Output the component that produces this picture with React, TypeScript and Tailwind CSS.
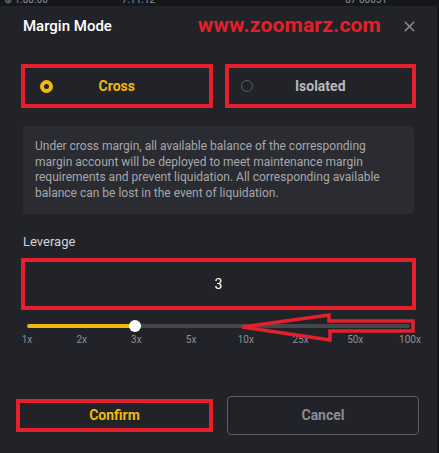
import { X } from "lucide-react";

const marks = ["1x", "2x", "3x", "5x", "10x", "25x", "50x", "100x"];

export default function App() {
  return (
    <div className="w-[439px] h-[453px] bg-[#222328] border-r-2 border-[#15161a] flex flex-col font-['Roboto',sans-serif] overflow-hidden">
      {/* page behind the modal */}
      <div className="h-[6px] bg-[#16171b] overflow-hidden">
        <div className="flex gap-[40px] pl-[4px] -mt-[6px] text-[10px] text-[#8c8f96] leading-[12px]">
          <span>⊕ 1.00.00</span>
          <span className="ml-[34px]">7.11.12</span>
          <span className="ml-[150px]">87 00051</span>
        </div>
      </div>

      <div className="h-[40px] flex items-center pl-[23px] pr-[19px]">
        <h2 className="text-[15px] font-medium text-white">Margin Mode</h2>
        <span className="ml-auto mr-[20px] text-[21px] font-bold text-[#e3202b] tracking-[0.2px]">
          www.zoomarz.com
        </span>
        <X size={17} strokeWidth={2} className="text-[#8a8d93]" />
      </div>

      <div className="mt-[18px] px-[21px] flex gap-[12px]">
        <button className="w-[193px] h-[44px] border-[4px] border-[#e3202b] flex items-center">
          <span className="ml-[15px] w-[13px] h-[13px] rounded-full border-[4px] border-[#f0b90b] bg-[#222328]" />
          <span className="flex-1 text-center text-[14px] font-bold text-[#f0b90b]">Cross</span>
          <span className="w-[28px]" />
        </button>
        <button className="w-[193px] h-[44px] border-[4px] border-[#e3202b] flex items-center">
          <span className="ml-[12px] w-[12px] h-[12px] rounded-full border border-[#5c5f66]" />
          <span className="flex-1 text-center text-[14px] font-bold text-[#b7b9bd]">Isolated</span>
          <span className="w-[24px]" />
        </button>
      </div>

      <div className="mt-[18px] mx-[23px] h-[88px] rounded-[3px] bg-[#2a2c31] px-[12px] py-[13px] text-[12px] leading-[15.7px] text-[#a6a8ad]">
        Under cross margin, all available balance of the corresponding margin account will be deployed to meet
        maintenance margin requirements and prevent liquidation. All corresponding available balance can be lost in
        the event of liquidation.
      </div>

      <div className="mt-[20px] pl-[23px] text-[13px] leading-[16px] text-[#d0d2d5]">Leverage</div>

      <div className="mt-[8px] mx-[21px] h-[52px] border-[4px] border-[#e3202b] flex items-center justify-center text-[14px] text-white">
        3
      </div>

      <div className="relative mt-[8px] h-[16px] ml-[27px] w-[383px] flex items-center">
        <div className="h-[4px] w-[108px] rounded-l-full bg-[#f0b90b]" />
        <div className="h-[4px] flex-1 rounded-r-full bg-[#45474d]" />
        <div className="absolute left-[102px] top-[2px] w-[12px] h-[12px] rounded-full bg-white" />
        <svg className="absolute -left-[27px] -top-[8px]" width="439" height="40" viewBox="0 310 439 40">
          <polygon
            points="242,327 329,315 329,321 413,321 413,331 330,331 330,340"
            fill="none"
            stroke="#e3202b"
            strokeWidth="3.5"
            strokeLinejoin="miter"
          />
        </svg>
      </div>

      <div className="ml-[27px] w-[383px] h-[12px] flex justify-between">
        {marks.map((m) => (
          <div key={m} className="w-0 flex justify-center">
            <span className="text-[10px] leading-[12px] text-[#8d9096] whitespace-nowrap">{m}</span>
          </div>
        ))}
      </div>

      <div className="mt-[50px] pl-[16px] flex items-center">
        <button className="w-[197px] h-[33px] border-[4px] border-[#e3202b] text-[14px] font-bold text-[#f0b90b]">
          Confirm
        </button>
        <button className="ml-[14px] w-[192px] h-[39px] rounded-[4px] border border-[#5e6066] text-[14px] font-bold text-[#8a8d93]">
          Cancel
        </button>
      </div>
    </div>
  );
}
